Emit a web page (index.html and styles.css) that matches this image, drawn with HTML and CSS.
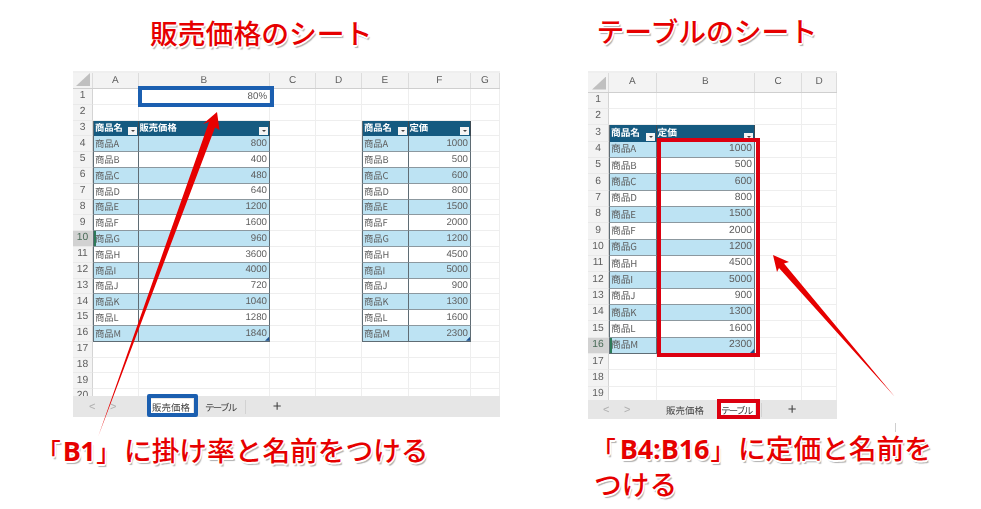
FILE: index.html
```html
<!DOCTYPE html>
<html lang="ja">
<head>
<meta charset="utf-8">
<title>販売価格のシートとテーブルのシート</title>
<link rel="stylesheet" href="styles.css">
</head>
<body>
<main class="canvas">
  <h2 class="note title title-left">販売価格のシート</h2>
  <h2 class="note title title-right">テーブルのシート</h2>

  <section class="sheet sheet-left">
    <div class="row head"><span class="corner"></span><span class="ch">A</span><span class="ch">B</span><span class="ch">C</span><span class="ch">D</span><span class="ch">E</span><span class="ch">F</span><span class="ch">G</span></div>
    <div class="rows">
      <div class="row"><span class="rh">1</span><span class="g"></span><span class="g num">80%</span><span class="g"></span><span class="g"></span><span class="g"></span><span class="g"></span><span class="g"></span></div>
      <div class="row"><span class="rh">2</span><span class="g"></span><span class="g"></span><span class="g"></span><span class="g"></span><span class="g"></span><span class="g"></span><span class="g"></span></div>
      <div class="row"><span class="rh">3</span><span class="th">商品名<i class="fb"></i></span><span class="th">販売価格<i class="fb"></i></span><span class="g"></span><span class="g"></span><span class="th">商品名<i class="fb"></i></span><span class="th">定価<i class="fb"></i></span><span class="g"></span></div>
      <div class="row"><span class="rh">4</span><span class="td b">商品A</span><span class="td b num">800</span><span class="g"></span><span class="g"></span><span class="td b">商品A</span><span class="td b num">1000</span><span class="g"></span></div>
      <div class="row"><span class="rh">5</span><span class="td">商品B</span><span class="td num">400</span><span class="g"></span><span class="g"></span><span class="td">商品B</span><span class="td num">500</span><span class="g"></span></div>
      <div class="row"><span class="rh">6</span><span class="td b">商品C</span><span class="td b num">480</span><span class="g"></span><span class="g"></span><span class="td b">商品C</span><span class="td b num">600</span><span class="g"></span></div>
      <div class="row"><span class="rh">7</span><span class="td">商品D</span><span class="td num">640</span><span class="g"></span><span class="g"></span><span class="td">商品D</span><span class="td num">800</span><span class="g"></span></div>
      <div class="row"><span class="rh">8</span><span class="td b">商品E</span><span class="td b num">1200</span><span class="g"></span><span class="g"></span><span class="td b">商品E</span><span class="td b num">1500</span><span class="g"></span></div>
      <div class="row"><span class="rh">9</span><span class="td">商品F</span><span class="td num">1600</span><span class="g"></span><span class="g"></span><span class="td">商品F</span><span class="td num">2000</span><span class="g"></span></div>
      <div class="row"><span class="rh on">10</span><span class="td b active">商品G</span><span class="td b num">960</span><span class="g"></span><span class="g"></span><span class="td b">商品G</span><span class="td b num">1200</span><span class="g"></span></div>
      <div class="row"><span class="rh">11</span><span class="td">商品H</span><span class="td num">3600</span><span class="g"></span><span class="g"></span><span class="td">商品H</span><span class="td num">4500</span><span class="g"></span></div>
      <div class="row"><span class="rh">12</span><span class="td b">商品I</span><span class="td b num">4000</span><span class="g"></span><span class="g"></span><span class="td b">商品I</span><span class="td b num">5000</span><span class="g"></span></div>
      <div class="row"><span class="rh">13</span><span class="td">商品J</span><span class="td num">720</span><span class="g"></span><span class="g"></span><span class="td">商品J</span><span class="td num">900</span><span class="g"></span></div>
      <div class="row"><span class="rh">14</span><span class="td b">商品K</span><span class="td b num">1040</span><span class="g"></span><span class="g"></span><span class="td b">商品K</span><span class="td b num">1300</span><span class="g"></span></div>
      <div class="row"><span class="rh">15</span><span class="td">商品L</span><span class="td num">1280</span><span class="g"></span><span class="g"></span><span class="td">商品L</span><span class="td num">1600</span><span class="g"></span></div>
      <div class="row"><span class="rh">16</span><span class="td b last">商品M</span><span class="td b num last end">1840</span><span class="g"></span><span class="g"></span><span class="td b last">商品M</span><span class="td b num last end">2300</span><span class="g"></span></div>
      <div class="row"><span class="rh">17</span><span class="g"></span><span class="g"></span><span class="g"></span><span class="g"></span><span class="g"></span><span class="g"></span><span class="g"></span></div>
      <div class="row"><span class="rh">18</span><span class="g"></span><span class="g"></span><span class="g"></span><span class="g"></span><span class="g"></span><span class="g"></span><span class="g"></span></div>
      <div class="row"><span class="rh">19</span><span class="g"></span><span class="g"></span><span class="g"></span><span class="g"></span><span class="g"></span><span class="g"></span><span class="g"></span></div>
      <div class="row"><span class="rh">20</span><span class="g"></span><span class="g"></span><span class="g"></span><span class="g"></span><span class="g"></span><span class="g"></span><span class="g"></span></div>
    </div>
    <div class="tabs">
      <span class="chev">&lt;</span><span class="chev">&gt;</span>
      <span class="tab active-tab">販売価格</span>
      <span class="tab short">テーブル</span>
      <span class="sep"></span>
      <span class="plus">+</span>
    </div>
  </section>

  <section class="sheet sheet-right">
    <div class="row head"><span class="corner"></span><span class="ch">A</span><span class="ch">B</span><span class="ch">C</span><span class="ch">D</span></div>
    <div class="rows">
      <div class="row"><span class="rh">1</span><span class="g"></span><span class="g"></span><span class="g"></span><span class="g"></span></div>
      <div class="row"><span class="rh">2</span><span class="g"></span><span class="g"></span><span class="g"></span><span class="g"></span></div>
      <div class="row"><span class="rh">3</span><span class="th">商品名<i class="fb"></i></span><span class="th">定価<i class="fb"></i></span><span class="g"></span><span class="g"></span></div>
      <div class="row"><span class="rh">4</span><span class="td b">商品A</span><span class="td b num">1000</span><span class="g"></span><span class="g"></span></div>
      <div class="row"><span class="rh">5</span><span class="td">商品B</span><span class="td num">500</span><span class="g"></span><span class="g"></span></div>
      <div class="row"><span class="rh">6</span><span class="td b">商品C</span><span class="td b num">600</span><span class="g"></span><span class="g"></span></div>
      <div class="row"><span class="rh">7</span><span class="td">商品D</span><span class="td num">800</span><span class="g"></span><span class="g"></span></div>
      <div class="row"><span class="rh">8</span><span class="td b">商品E</span><span class="td b num">1500</span><span class="g"></span><span class="g"></span></div>
      <div class="row"><span class="rh">9</span><span class="td">商品F</span><span class="td num">2000</span><span class="g"></span><span class="g"></span></div>
      <div class="row"><span class="rh">10</span><span class="td b">商品G</span><span class="td b num">1200</span><span class="g"></span><span class="g"></span></div>
      <div class="row"><span class="rh">11</span><span class="td">商品H</span><span class="td num">4500</span><span class="g"></span><span class="g"></span></div>
      <div class="row"><span class="rh">12</span><span class="td b">商品I</span><span class="td b num">5000</span><span class="g"></span><span class="g"></span></div>
      <div class="row"><span class="rh">13</span><span class="td">商品J</span><span class="td num">900</span><span class="g"></span><span class="g"></span></div>
      <div class="row"><span class="rh">14</span><span class="td b">商品K</span><span class="td b num">1300</span><span class="g"></span><span class="g"></span></div>
      <div class="row"><span class="rh">15</span><span class="td">商品L</span><span class="td num">1600</span><span class="g"></span><span class="g"></span></div>
      <div class="row"><span class="rh on">16</span><span class="td b last active">商品M</span><span class="td b num last end">2300</span><span class="g"></span><span class="g"></span></div>
      <div class="row"><span class="rh">17</span><span class="g"></span><span class="g"></span><span class="g"></span><span class="g"></span></div>
      <div class="row"><span class="rh">18</span><span class="g"></span><span class="g"></span><span class="g"></span><span class="g"></span></div>
      <div class="row"><span class="rh">19</span><span class="g"></span><span class="g"></span><span class="g"></span><span class="g"></span></div>
    </div>
    <div class="tabs">
      <span class="chev">&lt;</span><span class="chev">&gt;</span>
      <span class="tab">販売価格</span>
      <span class="tab short active-tab">テーブル</span>
      <span class="sep"></span>
      <span class="plus">+</span>
    </div>
  </section>

  <div class="box blue box-b1"></div>
  <div class="box blue box-tab1"></div>
  <div class="box red box-range"></div>
  <div class="box red box-tab2"></div>

  <svg class="arrows" viewBox="0 0 981 509" aria-hidden="true">
    <polygon class="arrow" points="217,112 219.5,130 215,127.5 98,437 209,122 203,124"/>
    <polygon class="arrow" points="773,255 789,262 784,263.5 895,397 779,268 777,272"/>
    <line class="hair" x1="895.5" y1="423" x2="895.5" y2="432"/>
  </svg>

  <p class="note cap cap-left"><span class="br">「</span><b>B1</b><span class="br">」</span>に掛け率と名前をつける</p>
  <p class="note cap cap-right"><span class="br">「</span><b>B4:B16</b><span class="br">」</span>に定価と名前を<br><span class="wrap">つける</span></p>
</main>
</body>
</html>
```

FILE: styles.css
```css
html, body {
  margin: 0;
  padding: 0;
  background: #fff;
}

.canvas {
  position: relative;
  width: 981px;
  height: 509px;
  overflow: hidden;
  font-family: "Noto Sans CJK JP", "Noto Sans", sans-serif;
}

/* Annotation text */
.note {
  position: absolute;
  margin: 0;
  color: #e60000;
  font-family: "Noto Sans CJK JP", "Noto Sans", sans-serif;
  font-weight: 500;
  font-size: 27.7px;
  line-height: 35px;
  white-space: nowrap;
  text-shadow:
    1.5px 0 0 #fff, -1.5px 0 0 #fff, 0 1.5px 0 #fff, 0 -1.5px 0 #fff,
    1px 1px 0 #fff, -1px 1px 0 #fff, 1px -1px 0 #fff, -1px -1px 0 #fff,
    1.5px 2.5px 1px #b0b0b0;
}

.title { font-size: 27.8px; }
.title-left { left: 150px; top: 15px; }
.title-right { left: 596.5px; top: 13px; }

.cap b {
  font-family: "Open Sans", "Noto Sans", sans-serif;
  font-weight: 700;
  font-size: 27px;
  letter-spacing: -0.5px;
}
.cap-left { left: 33px; top: 432px; }
.cap-right { left: 594px; top: 430px; }
.cap .br { display: inline-block; width: 27.7px; font-size: 24px; }
.cap .br:first-child { text-align: right; margin-right: 2px; }
.cap .br:nth-of-type(2) { text-align: left; margin-left: 1px; margin-right: 0; }
.cap-right .br:first-child { margin-left: -6px; margin-right: 4px; }
.cap-right b { letter-spacing: -0.1px; }
.wrap { display: inline-block; }

/* Spreadsheet screenshots placed on the canvas */
.sheet {
  position: absolute;
  display: flex;
  flex-direction: column;
  overflow: hidden;
  background: #fff;
  border-top: 2px solid #efefef;
  color: #5e5e5e;
  filter: blur(0.4px);
  box-sizing: border-box;
  text-rendering: geometricPrecision;
}
.sheet-left {
  left: 73px;
  top: 71px;
  width: 427px;
  height: 346px;
  --cols: 20px 45.5px 131.5px 46px 46px 46.5px 62.5px 29px;
  --h: 15.8px;
  --head: 15px;
  --text: 9.3px;
  --digit: 9.7px;
}
.sheet-right {
  left: 588px;
  top: 71px;
  width: 249px;
  height: 348px;
  --cols: 21px 47.5px 98.5px 47px 35px;
  --h: 16.35px;
  --head: 18.5px;
  --text: 9.7px;
  --digit: 10.3px;
}

.row {
  display: grid;
  grid-template-columns: var(--cols);
  height: var(--h);
  flex: none;
}
.row > span {
  box-sizing: border-box;
  display: flex;
  align-items: center;
  min-width: 0;
  line-height: 1;
  white-space: nowrap;
  overflow: hidden;
}
.row.head {
  height: var(--head);
  background: #f3f3f3;
  border-bottom: 1px solid #cfcfcf;
  box-sizing: content-box;
}
.rows {
  flex: 1;
  min-height: 0;
  overflow: hidden;
}
.corner {
  position: relative;
  border-right: 1px solid #dcdcdc;
}
.corner::after {
  content: "";
  position: absolute;
  right: 2px;
  bottom: 2px;
  width: 14px;
  height: 13px;
  background: #c0c0c0;
  clip-path: polygon(100% 0, 100% 100%, 0 100%);
}
.ch {
  justify-content: center;
  font-family: "Liberation Sans", sans-serif;
  font-size: 10px;
  border-right: 1px solid #dcdcdc;
}
.rh {
  justify-content: center;
  font-family: "Liberation Sans", sans-serif;
  font-size: 10.3px;
  background: #f3f3f3;
  border-right: 1px solid #d4d4d4;
  border-bottom: 1px solid #e9e9e9;
}
.rh.on { background: #d2d2d2; color: #4a6b58; }
.g {
  border-right: 1px solid #eeeeee;
  border-bottom: 1px solid #eeeeee;
}
.num {
  justify-content: flex-end;
  padding-right: 2px;
  font-family: "Liberation Sans", sans-serif;
  font-size: var(--digit);
}
.th {
  position: relative;
  padding-left: 1px;
  background: #155a80;
  color: #fff;
  font-weight: 700;
  font-size: var(--text);
  padding-bottom: 2px;
  border-right: 1px solid #3d4a52;
}
.fb {
  position: absolute;
  right: 1px;
  bottom: 1px;
  width: 9px;
  height: 8px;
  background: #f4f4f4;
}
.fb::after {
  content: "";
  position: absolute;
  left: 3px;
  top: 3px;
  border: 2px solid transparent;
  border-top: 2px solid #444;
  border-bottom: 0;
}
.td {
  padding-left: 1px;
  background: #fff;
  border-right: 1px solid #5f6c74;
  border-bottom: 1.5px solid #8c989f;
  font-size: var(--text);
}
.td:nth-child(2), .th:nth-child(2), .td:nth-child(6), .th:nth-child(6) {
  border-left: 1px solid #5f6c74;
}
.td.b { background: #bde3f3; }
.td.num { padding-left: 0; font-size: var(--digit); }
.td.last { border-bottom: 1.5px solid #5f6c74; }
.td.active { box-shadow: inset 2px 0 0 #2c7a58; }
.end { position: relative; }
.end::after {
  content: "";
  position: absolute;
  right: 0;
  bottom: 0;
  width: 4px;
  height: 4px;
  background: #1f4e8c;
  clip-path: polygon(100% 0, 100% 100%, 0 100%);
}

/* Sheet tabs */
.tabs {
  display: flex;
  align-items: center;
  flex: none;
  height: 21px;
  background: #e6e6e6;
  font-size: 9.5px;
  color: #444;
}
.sheet-left .tabs { padding-left: 16px; }
.sheet-right .tabs { padding-left: 15px; height: 19px; }
.chev {
  width: 21px;
  color: #b0b0b0;
  font-family: "Liberation Sans", sans-serif;
  font-size: 11px;
}
.tab { display: block; line-height: 16px; padding: 0 3px; }
.short { letter-spacing: -1.7px; }
.sheet-left .tab:nth-of-type(3) { margin-left: 18px; }
.sheet-left .tab:nth-of-type(4) { margin-left: 9px; }
.sheet-right .tab:nth-of-type(3) { margin-left: 18px; }
.sheet-right .tab:nth-of-type(4) { margin-left: 11px; }
.active-tab {
  background: #fff;
  box-shadow: inset 0 -1px 0 #2c7a58;
}
.sheet-right .active-tab { box-shadow: none; }
.sep { width: 1px; height: 14px; background: #d2d2d2; margin-left: 6px; }
.plus {
  font-family: "Liberation Sans", sans-serif;
  font-size: 15px;
  margin-left: 27px;
  color: #444;
}
.sheet-right .plus { margin-left: 26px; }

/* Highlight frames over the sheets */
.box { position: absolute; box-sizing: border-box; border-width: 4px; border-style: solid; }
.blue { border-color: #1b5fb0; }
.red { border-color: #dc0010; }
.box-b1 { left: 138px; top: 86px; width: 136px; height: 21px; }
.box-tab1 { left: 147px; top: 394px; width: 51px; height: 23px; border-radius: 2px; }
.box-range { left: 657px; top: 137.5px; width: 103px; height: 219px; }
.box-tab2 { left: 717px; top: 399px; width: 43px; height: 20px; }

.arrows {
  position: absolute;
  left: 0;
  top: 0;
  width: 981px;
  height: 509px;
  pointer-events: none;
}
.arrow { fill: #e60000; }
.hair { stroke: #cfcfcf; stroke-width: 1; }
```
